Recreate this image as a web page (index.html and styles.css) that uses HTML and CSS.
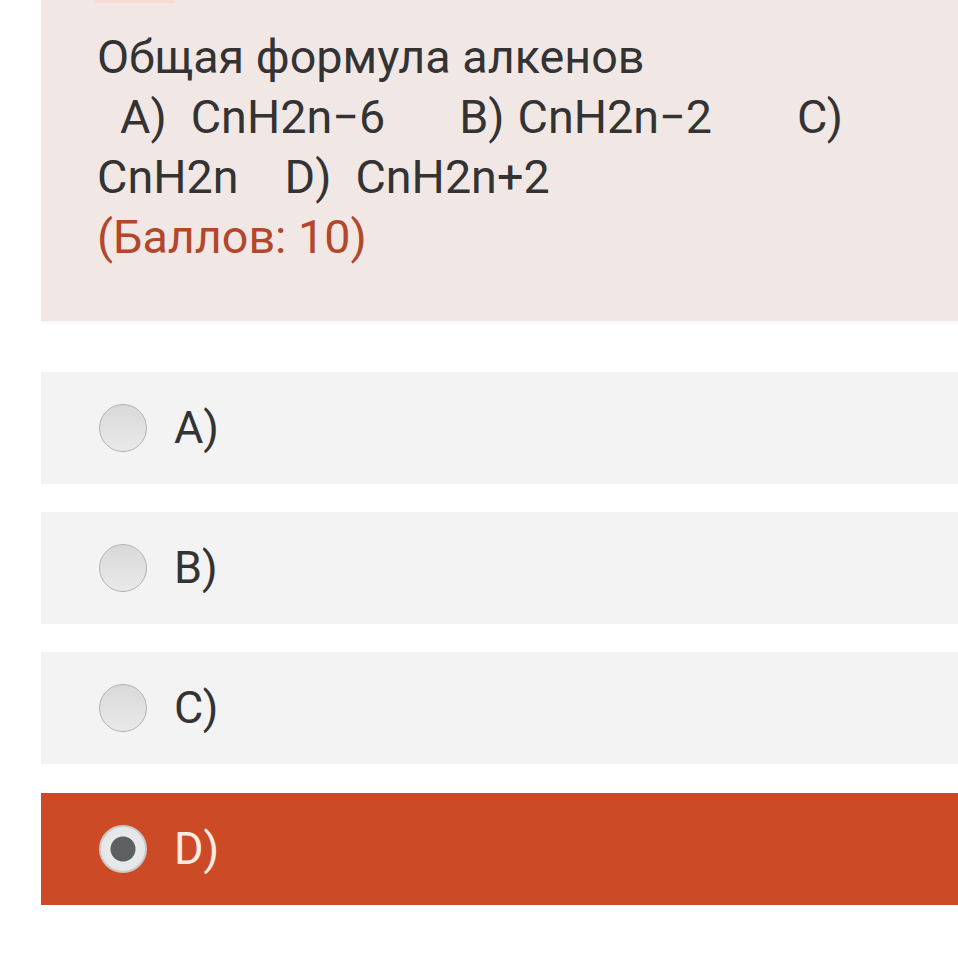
FILE: index.html
```html
<!DOCTYPE html>
<html lang="ru">
<head>
<meta charset="utf-8">
<link rel="stylesheet" href="styles.css">
</head>
<body>
<div class="page">
  <section class="question">
    <div class="tab"></div>
    <div class="qtext">
      <div class="line">Общая формула алкенов</div>
      <div class="line"><span class="s1">A)</span><span class="s2">CnH2n−6</span><span class="s3">B)</span><span class="s4">CnH2n−2</span><span class="s5">C)</span></div>
      <div class="line"><span>CnH2n</span><span class="s6">D)</span><span class="s7">CnH2n+2</span></div>
      <div class="line score">(Баллов: 10)</div>
    </div>
  </section>
  <div class="options">
    <label class="option"><span class="radio"></span><span class="opt-text">A)</span></label>
    <label class="option"><span class="radio"></span><span class="opt-text">B)</span></label>
    <label class="option"><span class="radio"></span><span class="opt-text">C)</span></label>
    <label class="option selected"><span class="radio checked"></span><span class="opt-text">D)</span></label>
  </div>
</div>
</body>
</html>
```

FILE: styles.css
```css
html, body {
  margin: 0;
  padding: 0;
  background: #ffffff;
}
body {
  font-family: Roboto, "Noto Sans", "Liberation Sans", sans-serif;
  color: #333333;
  overflow: hidden;
}
.page {
  margin-left: 41px;
  width: 917px;
}
.question {
  background: #f1e7e5;
  padding: 0 0 54px 56px;
  box-shadow: 0 2px 2px rgba(0,0,0,0.04);
}
.tab {
  width: 80px;
  height: 3px;
  background: #f6dcd4;
  margin-left: -2px;
}
.qtext {
  padding-top: 24px;
  font-size: 46.7px;
  line-height: 60px;
}
.line {
  white-space: nowrap;
}
.s1 { margin-left: 23px; }
.s2 { margin-left: 24px; }
.s3 { margin-left: 74px; }
.s4 { margin-left: 13px; }
.s5 { margin-left: 85px; }
.s6 { margin-left: 46px; }
.s7 { margin-left: 24px; }
.score {
  color: #b3472b;
}
.options {
  display: flex;
  flex-direction: column;
  gap: 28px;
  margin-top: 51px;
}
.option {
  display: flex;
  align-items: center;
  gap: 27px;
  height: 112px;
  padding-left: 58px;
  background: #f3f3f3;
  font-size: 45px;
  line-height: 60px;
}
.option.selected {
  margin-top: 1px;
  background: #cc4b26;
  color: #fcebe3;
}
.radio {
  box-sizing: border-box;
  width: 48px;
  height: 48px;
  border-radius: 50%;
  border: 1.5px solid #b4b4b4;
  background: linear-gradient(#d9d9d9, #e9e9e9);
  flex: none;
}
.radio.checked {
  border: 2px solid #c9c9c9;
  background: radial-gradient(circle, #5d5f61 0, #5d5f61 12px, #e8e9ea 13px, #e2e3e4 100%);
}
.opt-text {
  display: block;
}
```
